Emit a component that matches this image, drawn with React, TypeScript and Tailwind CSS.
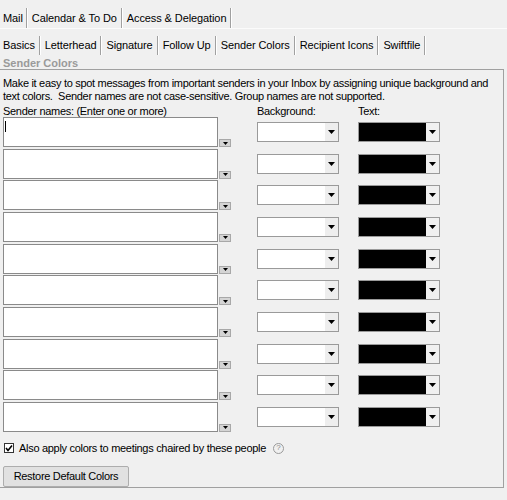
import React from "react";

const Arrow = () => (
  <svg width="7" height="4" viewBox="0 0 7 4"><path d="M0 0H7L3.5 4Z" fill="#000" /></svg>
);

function Sep() {
  return <div className="flex h-full"><div className="w-px bg-[#a0a0a0]" /><div className="w-px bg-white" /></div>;
}

function Row({ first }: { first?: boolean }) {
  return (
    <div className="flex h-[30px] items-center">
      <div className="relative h-[30px] w-[215px] border border-[#8a8a8a] bg-white">
        {first && <div className="absolute left-[1px] top-[3px] h-[11px] w-px bg-black" />}
      </div>
      <div className="ml-[1px] flex h-[8px] w-[12px] items-center justify-center self-end border border-[#a8a8a8] bg-[#d4d4d4]">
        <svg width="5" height="3" viewBox="0 0 5 3"><path d="M0 0H5L2.5 3Z" fill="#000" /></svg>
      </div>
      <div className="ml-[26px] flex h-[20px] w-[82px] border border-[#9a9a9a] bg-white">
        <div className="flex-1" />
        <div className="flex w-[13px] items-center justify-center bg-[#eeeeee]"><Arrow /></div>
      </div>
      <div className="ml-[19px] flex h-[20px] w-[82px] border border-[#9a9a9a] bg-black">
        <div className="flex-1" />
        <div className="flex w-[13px] items-center justify-center bg-[#f0f0f0]"><Arrow /></div>
      </div>
    </div>
  );
}

export default function App() {
  const top = ["Mail", "Calendar & To Do", "Access & Delegation"];
  const sub = ["Basics", "Letterhead", "Signature", "Follow Up", "Sender Colors", "Recipient Icons", "Swiftfile"];
  return (
    <div className="h-[500px] w-[507px] overflow-hidden bg-[#f0f0f0] text-[11px] leading-[13px] text-black" style={{ fontFamily: '"Liberation Sans", Arial, sans-serif' }}>
      <div className="pt-[8px]">
        <div className="flex h-[21px] items-stretch border-b border-[#fbfbfb] tracking-[-0.1px]">
          {top.map((t, i) => (
            <React.Fragment key={t}>
              <div className={i === 0 ? "flex items-center pl-[3px] pr-[3px]" : "flex items-center px-[4px]"}>{t}</div>
              <Sep />
            </React.Fragment>
          ))}
        </div>
      </div>
      <div className="mt-[7px] flex h-[19px] items-stretch tracking-[-0.1px]">
        {sub.map((t, i) => (
          <React.Fragment key={t}>
            <div className={i === 0 ? "flex items-center pl-[3px] pr-[4px]" : "flex items-center px-[4px]"}>{t}</div>
            <Sep />
          </React.Fragment>
        ))}
      </div>
      <div className="mt-[3px] h-[11px] pl-[3px] text-[11px] font-bold leading-[11px] text-[#9a9a9a]">Sender Colors</div>
      <div className="mr-[3px] h-[419px] border-b border-r border-t border-[#a0a0a0] pl-[3px] pt-[7px] tracking-[-0.3px]">
        <div className="pr-[2px] leading-[13px]">
          Make it easy to spot messages from important senders in your Inbox by assigning unique background and text colors.&nbsp; Sender names are not case-sensitive. Group names are not supported.
        </div>
        <div className="mt-[3px] flex h-[11px] leading-[11px]">
          <div className="w-[254px]">Sender names: (Enter one or more)</div>
          <div className="w-[101px]">Background:</div>
          <div>Text:</div>
        </div>
        <div className="flex flex-col gap-[1.67px]">
          {Array.from({ length: 10 }).map((_, i) => <Row key={i} first={i === 0} />)}
        </div>
        <div className="mt-[10px] flex h-[13px] items-center">
          <div className="ml-[1px] flex h-[10px] w-[10px] items-center justify-center border border-[#333] bg-white">
            <svg width="8" height="8" viewBox="0 0 8 8"><path d="M1 4L3 6.5L7 1.5" stroke="#000" strokeWidth="1.6" fill="none" /></svg>
          </div>
          <span className="ml-[5px]">Also apply colors to meetings chaired by these people</span>
          <div className="ml-[7px] flex h-[11px] w-[11px] items-center justify-center rounded-full border border-[#9a9a9a] text-[8px] leading-none tracking-normal text-[#8a8a8a]">?</div>
        </div>
        <div className="mt-[11px] flex h-[21px] w-[126px] items-center justify-center rounded-[2px] border border-[#adadad] bg-[#e1e1e1]">Restore Default Colors</div>
      </div>
    </div>
  );
}
